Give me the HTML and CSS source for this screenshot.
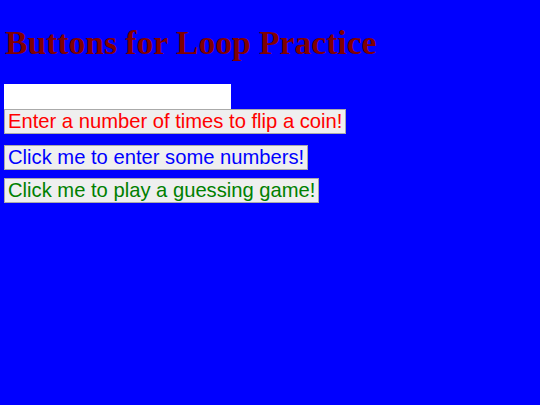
FILE: index.html
```html
<!DOCTYPE html>
<html>
<head>
<meta charset="utf-8">
<link rel="stylesheet" href="styles.css">
</head>
<body class="page">
<h1 class="title">Buttons for Loop Practice</h1>
<div class="controls">
  <input class="field" type="text">
  <button class="btn btn-red">Enter a number of times to flip a coin!</button>
  <button class="btn btn-blue gap-lg">Click me to enter some numbers!</button>
  <button class="btn btn-green gap-sm">Click me to play a guessing game!</button>
</div>
</body>
</html>
```
FILE: styles.css
```css
html, body { margin: 0; padding: 0; }
.page {
  background: #0000ff;
  padding: 4px;
  font-family: "Liberation Serif", serif;
}
.title {
  color: #800000;
  font-family: "Liberation Serif", serif;
  font-weight: bold;
  font-size: 33.6px;
  line-height: 38px;
  margin: 20px 0 22px 1px;
}
.controls {
  display: flex;
  flex-direction: column;
  align-items: flex-start;
}
.field {
  width: 227px;
  height: 25px;
  box-sizing: border-box;
  border: none;
  background: #fff;
  margin: 0;
  padding: 0;
}
.btn {
  font-family: "Liberation Sans", Arial, sans-serif;
  font-size: 20.2px;
  background: #efefef;
  border: 1px solid #aaa;
  margin: 0;
  padding: 0 3px;
  height: 25px;
  line-height: 23px;
}
.btn-red { color: #ff0000; }
.btn-blue { color: #0000ff; }
.btn-green { color: #008000; }
.gap-lg { margin-top: 11px; }
.gap-sm { margin-top: 8px; }
```
